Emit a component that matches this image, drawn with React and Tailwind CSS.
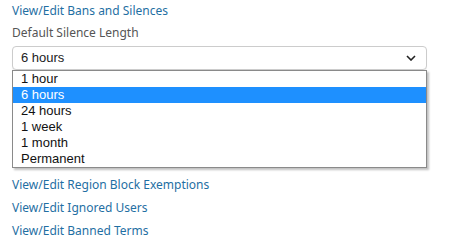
import React from "react";

const linkCls = "text-[#1f6fa3] text-[12px] leading-[22px] block";

export default function App() {
  const options = ["1 hour", "6 hours", "24 hours", "1 week", "1 month", "Permanent"];
  return (
    <div className="w-[465px] h-[250px] bg-white overflow-hidden px-3" style={{ fontFamily: "'Noto Sans', 'DejaVu Sans', sans-serif" }}>
      <a className={linkCls}>View/Edit Bans and Silences</a>
      <div className="text-[#555555] text-[12px] leading-[22px]">Default Silence Length</div>
      <div className="w-[415px] mt-[2px]">
        <div className="h-[24px] border border-[#cccccc] rounded-[4px] bg-white flex items-center justify-between pl-[8px] pr-[8px] shadow-[0_1px_1px_rgba(0,0,0,0.06)]" style={{ fontFamily: "'Liberation Sans', Arial, sans-serif" }}>
          <span className="text-[13px] text-[#222]">6 hours</span>
          <svg width="10" height="6" viewBox="0 0 10 6" className="mr-[2px]">
            <path d="M1 1 L5 5 L9 1" fill="none" stroke="#222" strokeWidth="1.6" />
          </svg>
        </div>
        <div className="border border-[#8a8a8a] bg-white shadow-[2px_2px_2px_rgba(0,0,0,0.25)]" style={{ fontFamily: "'Liberation Sans', Arial, sans-serif" }}>
          {options.map((o) => (
            <div
              key={o}
              className={
                "h-[16px] leading-[16px] text-[13px] pl-[8px] " +
                (o === "6 hours" ? "bg-[#1e90ff] text-white" : "text-[#111]")
              }
            >
              {o}
            </div>
          ))}
        </div>
      </div>
      <div className="mt-[6px] flex flex-col gap-[1px]">
        <a className={linkCls}>View/Edit Region Block Exemptions</a>
        <a className={linkCls}>View/Edit Ignored Users</a>
        <a className={linkCls}>View/Edit Banned Terms</a>
      </div>
    </div>
  );
}
